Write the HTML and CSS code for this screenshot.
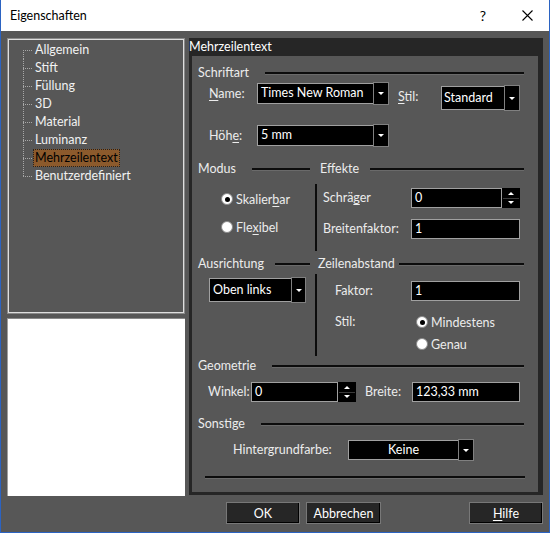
FILE: index.html
```html
<!DOCTYPE html>
<html lang="de">
<head>
  <meta charset="UTF-8">
  <title>Eigenschaften</title>
  <link rel="stylesheet" href="styles.css">
</head>
<body>
  <div class="window">
    <div class="titlebar">
      <span class="title">Eigenschaften</span>
      <span class="help">?</span>
      <svg class="close" width="11" height="11" viewBox="0 0 11 11">
        <path d="M0.5 0.5 L10.5 10.5 M10.5 0.5 L0.5 10.5" stroke="#000" stroke-width="1.1" fill="none"/>
      </svg>
    </div>

    <div class="client">
      <div class="main">
        <div class="sidebar">
          <div class="tree">
            <ul>
              <li><span class="twig"></span><span class="label">Allgemein</span></li>
              <li><span class="twig"></span><span class="label">Stift</span></li>
              <li><span class="twig"></span><span class="label">Füllung</span></li>
              <li><span class="twig"></span><span class="label">3D</span></li>
              <li><span class="twig"></span><span class="label">Material</span></li>
              <li><span class="twig"></span><span class="label">Luminanz</span></li>
              <li class="selected"><span class="twig"></span><span class="label">Mehrzeilentext</span></li>
              <li><span class="twig"></span><span class="label">Benutzerdefiniert</span></li>
            </ul>
          </div>
          <div class="preview"></div>
        </div>

        <div class="page">
          <div class="page-title">Mehrzeilentext</div>
          <div class="panel">
            <!-- Schriftart -->
            <div class="group-head"><span>Schriftart</span><span class="rule"></span></div>
            <div class="row row-name">
              <span class="lbl lbl-name"><u>N</u>ame:</span>
              <div class="combo combo-font">
                <span class="field">Times New Roman</span><span class="drop"></span>
              </div>
              <span class="lbl lbl-stil"><u>S</u>til:</span>
              <div class="combo combo-stil">
                <span class="field">Standard</span><span class="drop"></span>
              </div>
            </div>
            <div class="row row-hoehe">
              <span class="lbl lbl-name">Höh<u>e</u>:</span>
              <div class="combo combo-font">
                <span class="field">5 mm</span><span class="drop"></span>
              </div>
            </div>

            <!-- Modus / Effekte -->
            <div class="split-head split-head-1">
              <div class="group-head"><span>Modus</span><span class="rule"></span></div>
              <div class="group-head"><span>Effekte</span><span class="rule"></span></div>
            </div>
            <div class="split split-1">
              <div class="left">
                <div class="option"><span class="radio on"></span>Skalier<u>b</u>ar</div>
                <div class="option"><span class="radio"></span>Fle<u>x</u>ibel</div>
              </div>
              <div class="sep"></div>
              <div class="right">
                <div class="frow">
                  <span class="lbl lbl-fx">Schrä<u>g</u>er</span>
                  <div class="spinbox spin-fx">
                    <span class="field">0</span>
                    <span class="spin"><span class="up"></span><span class="down"></span></span>
                  </div>
                </div>
                <div class="frow">
                  <span class="lbl lbl-fx">Breitenfaktor:</span>
                  <span class="field input-fx">1</span>
                </div>
              </div>
            </div>

            <!-- Ausrichtung / Zeilenabstand -->
            <div class="split-head split-head-2">
              <div class="group-head"><span>Ausrichtung</span><span class="rule"></span></div>
              <div class="group-head"><span>Zeilenabstand</span><span class="rule"></span></div>
            </div>
            <div class="split split-2">
              <div class="left">
                <div class="combo combo-align">
                  <span class="field">Oben links</span><span class="drop"></span>
                </div>
              </div>
              <div class="sep"></div>
              <div class="right">
                <div class="frow">
                  <span class="lbl lbl-za">Faktor:</span>
                  <span class="field input-fx">1</span>
                </div>
                <div class="frow frow-stil">
                  <span class="lbl lbl-za">Stil:</span>
                  <div class="option option-za"><span class="radio on"></span>Mindestens</div>
                </div>
                <div class="frow frow-genau">
                  <span class="lbl lbl-za"></span>
                  <div class="option option-za"><span class="radio"></span>Genau</div>
                </div>
              </div>
            </div>

            <!-- Geometrie -->
            <div class="group-head head-geo"><span>Geometrie</span><span class="rule"></span></div>
            <div class="row row-geo">
              <span class="lbl lbl-winkel">Winkel:</span>
              <div class="spinbox spin-winkel">
                <span class="field">0</span>
                <span class="spin"><span class="up"></span><span class="down"></span></span>
              </div>
              <span class="lbl lbl-breite">Breite:</span>
              <span class="field input-breite">123,33 mm</span>
            </div>

            <!-- Sonstige -->
            <div class="group-head head-sonst"><span>Sonstige</span><span class="rule"></span></div>
            <div class="row row-bg">
              <span class="lbl lbl-bg">Hintergrundfarbe:</span>
              <div class="combo combo-bg">
                <span class="field">Keine</span><span class="drop"></span>
              </div>
            </div>
            <div class="rule bottom-rule"></div>
          </div>
        </div>
      </div>

      <div class="buttons">
        <button class="btn btn-ok">OK</button>
        <button class="btn btn-cancel">Abbrechen</button>
        <button class="btn btn-help"><u>H</u>ilfe</button>
      </div>
    </div>
  </div>
</body>
</html>
```

FILE: styles.css
```css
* {
  box-sizing: border-box;
}

body {
  margin: 0;
  font-family: Lato, 'Noto Sans', sans-serif;
  font-size: 12.5px;
  color: #ececec;
}

u {
  text-decoration: underline;
  text-underline-offset: 2px;
}

/* the dialog frame */
.window {
  width: 550px;
  height: 533px;
  background: #575757;
  border: 1px solid #2b63c2;
  border-top: none;
  display: flex;
  flex-direction: column;
}

.titlebar {
  height: 31px;
  flex: none;
  background: #fff;
  color: #000;
  display: flex;
  align-items: center;
  padding-left: 9px;
}

.titlebar .help {
  margin-left: auto;
  width: 14px;
  text-align: center;
  font-size: 14px;
  margin-right: 32px;
}

.titlebar .close {
  margin-right: 16px;
}

.client {
  flex: 1;
  padding: 7px 6px 0 6px;
}

.main {
  display: flex;
  gap: 4px;
  height: 457px;
  align-items: flex-start;
}

/* left column: tree + preview */
.sidebar {
  width: 178px;
  height: 458px;
  display: flex;
  flex-direction: column;
  gap: 4px;
}

.tree {
  height: 276px;
  border: 1px solid #8a8a8a;
  box-shadow: inset 0 0 0 1px #dedede;
  padding: 2px 0 0 2px;
}

.tree ul {
  list-style: none;
  margin: 0;
  padding: 0;
}

.tree li {
  display: flex;
  height: 18px;
  line-height: 18px;
  color: #f2f2f2;
}

.tree .twig {
  width: 10px;
  margin-left: 13px;
  background:
    repeating-linear-gradient(to right, #a8a8a8 0 1px, transparent 1px 2px) left 9px / 100% 1px no-repeat,
    repeating-linear-gradient(to bottom, #a8a8a8 0 1px, transparent 1px 2px) left top / 1px 100% no-repeat;
}

.tree li:first-child .twig {
  background:
    repeating-linear-gradient(to right, #a8a8a8 0 1px, transparent 1px 2px) left 9px / 100% 1px no-repeat,
    repeating-linear-gradient(to bottom, #a8a8a8 0 1px, transparent 1px 2px) left 9px / 1px 9px no-repeat;
}

.tree li:last-child .twig {
  background:
    repeating-linear-gradient(to right, #a8a8a8 0 1px, transparent 1px 2px) left 9px / 100% 1px no-repeat,
    repeating-linear-gradient(to bottom, #a8a8a8 0 1px, transparent 1px 2px) left top / 1px 10px no-repeat;
}

.tree .label {
  padding: 0 2px;
}

.tree .selected .label {
  background: #8c5a2c;
  color: #000;
  outline: 1px dotted #222;
  outline-offset: -1px;
}

.preview {
  height: 178px;
  background: #fff;
  border-top: 1px solid #8a8a8a;
  border-left: 1px solid #a0a0a0;
}

/* right page */
.page {
  width: 354px;
  height: 457px;
  background: #262626;
  display: flex;
  flex-direction: column;
}

.page-title {
  height: 18px;
  line-height: 18px;
  color: #fff;
}

.panel {
  flex: 1;
  margin: 0 5px 3px 3px;
  background: #575757;
  padding: 9px 14px 0 6px;
}

.group-head {
  display: flex;
  align-items: center;
  height: 16px;
  line-height: 16px;
  white-space: nowrap;
}

.rule {
  flex: 1;
  margin-left: 16px;
  border-top: 2px solid #0c0c0c;
  border-bottom: 1px solid #6a6a6a;
}

.lbl {
  flex: none;
  line-height: 20px;
}

.row {
  display: flex;
  align-items: flex-start;
}

/* inputs */
.field {
  display: block;
  background: #000;
  color: #fff;
  border: 1px solid #a0a0a0;
  padding: 0 3px;
  line-height: 18px;
  white-space: nowrap;
  overflow: hidden;
}

.combo {
  display: flex;
  height: 21px;
}

.combo .field {
  flex: 1;
  border-right: none;
}

.combo .drop {
  width: 16px;
  margin: -1px 0;
  background: #000;
  border: 1px solid #808080;
  display: flex;
  align-items: center;
  justify-content: center;
}

.combo .drop::after,
.spin .down::after {
  content: "";
  border-left: 3px solid transparent;
  border-right: 3px solid transparent;
  border-top: 3px solid #fff;
}

.spin .up::after {
  content: "";
  border-left: 3px solid transparent;
  border-right: 3px solid transparent;
  border-bottom: 3px solid #fff;
}

.spinbox {
  display: flex;
  height: 20px;
}

.spinbox .field {
  flex: 1;
}

.spin {
  width: 18px;
  display: flex;
  flex-direction: column;
  gap: 1px;
  background: #3a3a3a;
  border: 1px solid #000;
}

.spin span {
  flex: 1;
  background: #000;
  display: flex;
  align-items: center;
  justify-content: center;
}

/* Schriftart */
.row-name {
  margin-top: 2px;
  padding-left: 11px;
}

.lbl-name {
  width: 48px;
  line-height: 21px;
}

.combo-font {
  width: 132px;
}

.lbl-stil {
  width: 43px;
  margin-left: 9px;
  line-height: 27px;
}

.combo-stil {
  width: 79px;
  height: 24px;
  margin-top: 3px;
}

.combo-stil .field {
  padding-left: 2px;
  line-height: 21px;
}

.row-hoehe {
  margin-top: 15px;
  padding-left: 11px;
}

/* two column sections */
.split-head {
  display: flex;
}

.split-head .group-head:first-child {
  width: 112px;
}

.split-head .group-head:last-child {
  flex: 1;
}

.split-head-1 {
  margin-top: 15px;
}

.split-head-1 .group-head:last-child {
  margin-left: 10px;
}

.split-head-1 .group-head:last-child .rule {
  margin-left: 11px;
}

.split-head-2 {
  margin-top: 5px;
}

.split-head-2 .group-head:first-child .rule {
  margin-left: 11px;
}

.split-head-2 .group-head:last-child {
  margin-left: 8px;
}

.split-head-2 .group-head:last-child .rule {
  margin-left: 4px;
}

.split {
  display: flex;
}

.split .left {
  width: 117px;
  display: flex;
  flex-direction: column;
}

.split .sep {
  width: 2px;
  background: #0c0c0c;
}

.split .right {
  flex: 1;
  display: flex;
  flex-direction: column;
}

.split-1 {
  height: 67px;
  margin-top: 7px;
}

.split-1 .left {
  padding: 5px 0 0 23px;
  gap: 8px;
}

.split-1 .right {
  padding: 4px 0 0 6px;
  gap: 11px;
}

.option {
  display: flex;
  align-items: center;
  height: 20px;
}

.radio {
  width: 12px;
  height: 12px;
  border-radius: 50%;
  background: #fff;
  border: 1px solid #8a8a8a;
  margin-right: 3px;
  display: flex;
  align-items: center;
  justify-content: center;
}

.radio.on::after {
  content: "";
  width: 5px;
  height: 5px;
  border-radius: 50%;
  background: #000;
}

.frow {
  display: flex;
  align-items: center;
  height: 20px;
}

.lbl-fx {
  width: 88px;
}

.spin-fx {
  width: 109px;
}

.input-fx {
  width: 109px;
  height: 20px;
}

.split-2 {
  height: 82px;
  margin-top: 2px;
}

.split-2 .left {
  padding: 4px 0 0 11px;
}

.combo-align {
  width: 97px;
  height: 24px;
}

.combo-align .field {
  line-height: 21px;
}

.combo-align .drop {
  width: 15px;
}

.split-2 .right {
  padding: 7px 0 0 18px;
}

.lbl-za {
  width: 76px;
}

.frow-stil {
  margin-top: 11px;
}

.frow-genau {
  margin-top: 2px;
}

.option-za {
  margin-left: 5px;
}

/* Geometrie */
.head-geo {
  margin-top: 2px;
}

.row-geo {
  margin-top: 8px;
  padding-left: 10px;
}

.lbl-winkel {
  width: 43px;
}

.spin-winkel {
  width: 105px;
}

.lbl-breite {
  width: 47px;
  margin-left: 9px;
}

.input-breite {
  width: 108px;
  height: 20px;
}

/* Sonstige */
.head-sonst {
  margin-top: 14px;
}

.row-bg {
  margin-top: 8px;
  padding-left: 35px;
}

.lbl-bg {
  width: 115px;
}

.combo-bg {
  width: 126px;
  height: 20px;
}

.combo-bg .field {
  text-align: center;
}

.bottom-rule {
  margin: 16px -1px 0 7px;
}

/* dialog buttons */
.buttons {
  display: flex;
  margin-top: 7px;
}

.btn {
  height: 22px;
  background: #262626;
  color: #fff;
  font: inherit;
  border: 1px solid #787878;
  box-shadow: inset -1px -1px 0 #000;
  padding: 0;
}

.btn-ok {
  width: 74px;
  margin-left: 219px;
}

.btn-cancel {
  width: 75px;
  margin-left: 6px;
}

.btn-help {
  width: 74px;
  margin-left: auto;
}
```
